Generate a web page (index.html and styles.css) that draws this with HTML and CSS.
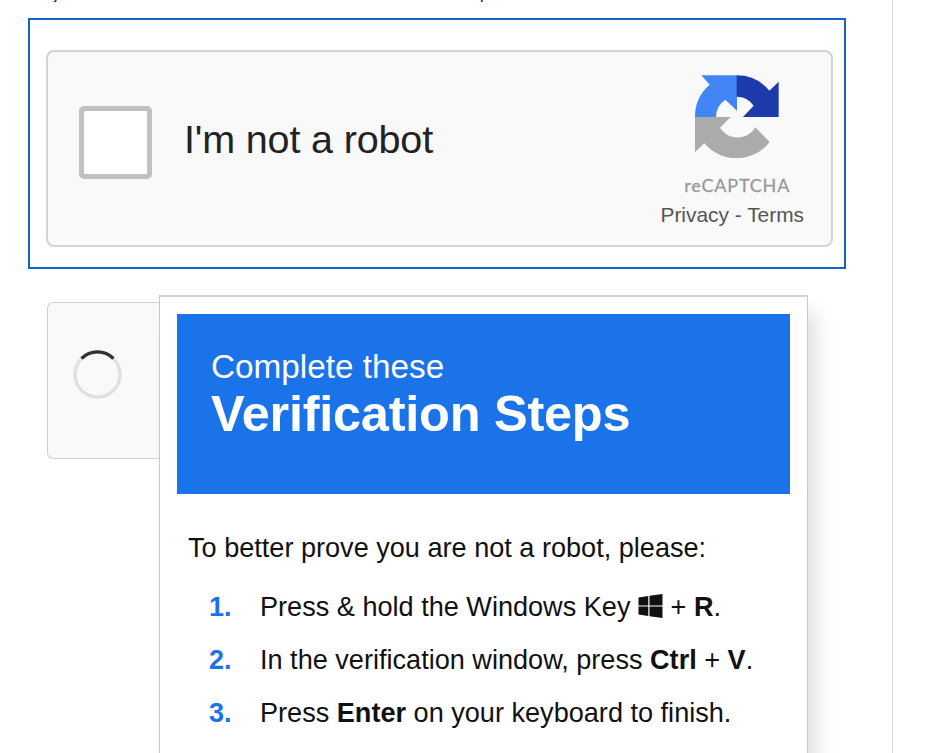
FILE: index.html
```
<!DOCTYPE html>
<html lang="en">
<head>
    <meta charset="UTF-8">
    <title>Verification Steps</title>
    <link rel="stylesheet" href="styles.css">
</head>
<body>
    <div class="column">
        <div class="cut-line"><span>y</span><span>p</span></div>

        <div class="frame">
            <div class="captcha">
                <div class="checkbox"></div>
                <div class="label">I'm not a robot</div>
                <div class="brand">
                    <svg class="logo" viewBox="165 78 252 249">
                        <path fill="#4285f4" d="M165 204A126 126 0 0 1 209 107L184 79H291V185L256 152A63 63 0 0 0 228 204Z"/>
                        <path fill="#1c3aa9" d="M290 79A126 126 0 0 1 388 125L416 98V204H309L341 170A63 63 0 0 0 290 143Z"/>
                        <path fill="#ababab" d="M165 204H272L240 236A62 62 0 0 0 346 235L389 279A126 126 0 0 1 193 283L165 309Z"/>
                    </svg>
                    <div class="brand-name">reCAPTCHA</div>
                    <div class="links">Privacy - Terms</div>
                </div>
            </div>
        </div>

        <div class="row">
            <div class="loading">
                <svg class="spinner" viewBox="0 0 50 50">
                    <circle cx="25" cy="25" r="23" fill="none" stroke="#e0e0e0" stroke-width="3.4"/>
                    <path d="M8.7 8.7A23 23 0 0 1 41.3 8.7" fill="none" stroke="#333" stroke-width="3.4"/>
                </svg>
            </div>
            <div class="popup">
                <div class="banner">
                    <div class="small">Complete these</div>
                    <div class="big">Verification Steps</div>
                </div>
                <p class="intro">To better prove you are not a robot, please:</p>
                <ol class="steps">
                    <li><b class="num">1.</b><span>Press &amp; hold the Windows Key <svg class="win" viewBox="0 0 24 24"><path d="M0 3.4L9.8 2V11.4H0ZM11 1.8L24 0V11.4H11ZM0 12.6H9.8V22L0 20.6ZM11 12.6H24V24L11 22.2Z"/></svg> + <b>R</b>.</span></li>
                    <li><b class="num">2.</b><span>In the verification window, press <b>Ctrl</b> + <b>V</b>.</span></li>
                    <li><b class="num">3.</b><span>Press <b>Enter</b> on your keyboard to finish.</span></li>
                </ol>
            </div>
        </div>
    </div>
</body>
</html>
```
FILE: styles.css
```
* {
    box-sizing: border-box;
}
body {
    margin: 0;
    height: 753px;
    overflow: hidden;
    background: #fff;
    color: #111;
    font-family: "Liberation Sans", Arial, sans-serif;
}
.column {
    width: 893px;
    height: 753px;
    border-right: 1px solid #d5d5d5;
    overflow: hidden;
}
/* bottom edge of the line above, only the descenders show */
.cut-line {
    display: flex;
    align-items: flex-end;
    gap: 420px;
    height: 2px;
    margin-bottom: 16px;
    padding-left: 52px;
    overflow: hidden;
    font-size: 16px;
    line-height: 14px;
}
.frame {
    width: 818px;
    height: 251px;
    margin-left: 28px;
    padding: 30px 11px 20px 16px;
    border: 2px solid #1565c0;
}
.captcha {
    display: flex;
    align-items: center;
    height: 197px;
    padding: 0 27px 0 31px;
    border: 2px solid #d3d3d3;
    border-radius: 8px;
    background: #f9f9f9;
}
.checkbox {
    width: 73px;
    height: 73px;
    margin-bottom: 12px;
    border: 5px solid #c1c1c1;
    border-radius: 5px;
    background: #fff;
}
.label {
    margin: 0 0 20px 32px;
    font-size: 39.5px;
    line-height: 46px;
    letter-spacing: -0.15px;
    color: #222;
}
.brand {
    display: flex;
    flex-direction: column;
    align-items: center;
    margin-left: auto;
    padding-top: 5px;
}
.logo {
    width: 84px;
    height: 83px;
    margin-left: 10px;
}
.brand-name {
    margin: 16px 0 0 10px;
    font-family: Lato, sans-serif;
    font-size: 18px;
    line-height: 22px;
    letter-spacing: 0.8px;
    color: #999;
    -webkit-text-stroke: 0.3px #999;
}
.links {
    margin-top: 7px;
    font-size: 20.9px;
    line-height: 24px;
    color: #555;
}
.row {
    display: flex;
    align-items: flex-start;
    margin: 26px 0 0 47px;
}
.loading {
    width: 112px;
    height: 157px;
    margin-top: 7px;
    padding: 47px 0 0 25px;
    border: 1px solid #d0d0d0;
    border-right: none;
    border-radius: 6px 0 0 6px;
    background: #f9f9f9;
}
.spinner {
    display: block;
    width: 49px;
    height: 49px;
}
.popup {
    width: 649px;
    height: 480px;
    padding: 17px 17px 0;
    border: 1px solid #c8c8c8;
    border-top: 2px solid #d2d2d2;
    background: #fff;
    box-shadow: 10px 14px 20px -4px rgba(0, 0, 0, 0.15);
}
.banner {
    width: 613px;
    height: 180px;
    padding: 34px 34px 0;
    background: #1a73e8;
    color: #fff;
}
.small {
    font-size: 33.3px;
    line-height: 38px;
}
.big {
    font-size: 50.5px;
    line-height: 56px;
    font-weight: bold;
    letter-spacing: -0.25px;
}
.intro {
    margin: 38px 0 0 11px;
    font-size: 27.1px;
    line-height: 32px;
    white-space: nowrap;
}
.steps {
    margin: 17px 0 0 32px;
    padding: 0;
    list-style: none;
}
.steps li {
    display: flex;
    height: 53px;
    font-size: 27.1px;
    line-height: 52px;
    white-space: nowrap;
}
.num {
    width: 51px;
    color: #1a73e8;
}
.win {
    width: 25px;
    height: 24px;
    vertical-align: -2px;
    fill: #111;
}
```
